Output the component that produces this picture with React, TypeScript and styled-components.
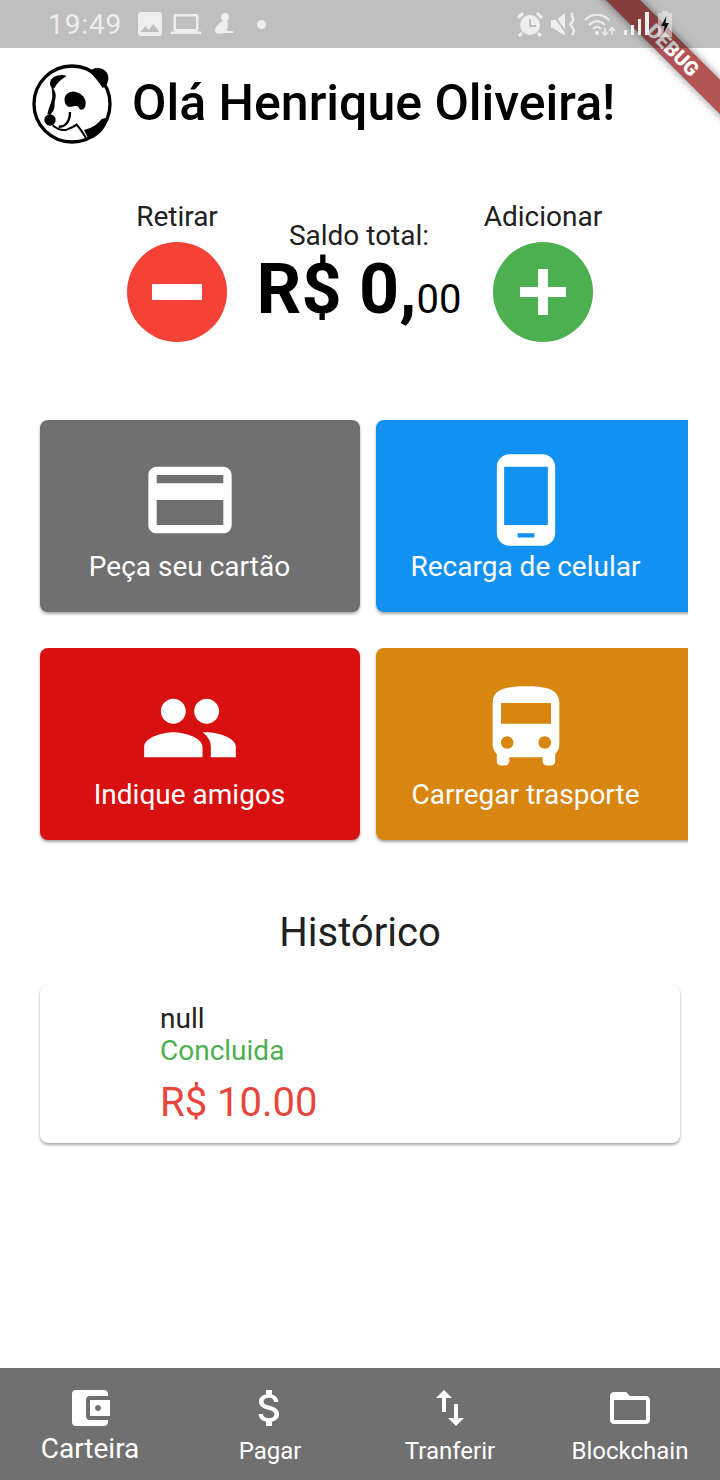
import React from 'react';
import styled, { createGlobalStyle } from 'styled-components';
import {
  MdAccountBalanceWallet,
  MdAttachMoney,
  MdCreditCard,
  MdDirectionsBus,
  MdFolderOpen,
  MdImage,
  MdLaptop,
  MdPeople,
  MdPhoneAndroid,
  MdSwapVert
} from 'react-icons/md';

const GlobalStyle = createGlobalStyle`
  html, body {
    margin: 0;
    padding: 0;
    background: #fff;
    font-family: Roboto, "Liberation Sans", sans-serif;
  }
`;

const Screen = styled.div`
  position: relative;
  width: 720px;
  height: 1480px;
  overflow: hidden;
  display: flex;
  flex-direction: column;
  background: #fff;
`;

const StatusBar = styled.div`
  position: relative;
  z-index: 2;
  height: 48px;
  flex: none;
  background: rgba(0, 0, 0, 0.25);
  color: #eeeeee;
  display: flex;
  align-items: center;
  justify-content: space-between;
  padding: 0 48px;
`;

const StatusGroup = styled.div`
  display: flex;
  align-items: center;
  gap: ${props => props.$gap}px;
`;

const Clock = styled.span`
  font-size: 28px;
  letter-spacing: 0.9px;
  margin-right: 7px;
`;

const Dot = styled.span`
  width: 9px;
  height: 9px;
  border-radius: 50%;
  background: #eeeeee;
  margin-left: 16px;
`;

const SittingSvg = styled.svg`
  margin-left: 6px;
`;

const DebugBanner = styled.div`
  position: absolute;
  z-index: 1;
  left: 573px;
  top: 38px;
  width: 200px;
  height: 24px;
  transform: rotate(45deg);
  background: rgba(150, 15, 15, 0.72);
  box-shadow: 0 0 8px rgba(0, 0, 0, 0.5);
  color: #fff;
  font-size: 20px;
  font-weight: 900;
  line-height: 24px;
  text-align: center;
`;

const Header = styled.header`
  display: flex;
  align-items: center;
  gap: 18px;
  height: 80px;
  margin-top: 16px;
  padding-left: 30px;
`;

const Title = styled.h1`
  margin: 0;
  font-size: 50px;
  font-weight: 500;
  color: #000;
  white-space: nowrap;
  position: relative;
  top: -1px;
`;

const BalanceRow = styled.section`
  display: flex;
  justify-content: center;
  align-items: flex-end;
  margin-top: 56px;
  height: 142px;
`;

const ActionColumn = styled.div`
  display: flex;
  flex-direction: column;
  align-items: center;
  width: 140px;
`;

const ActionLabel = styled.span`
  font-size: 28px;
  line-height: 40px;
  margin-bottom: 5px;
  color: #212121;
  white-space: nowrap;
`;

const RoundButton = styled.div`
  width: 100px;
  height: 100px;
  border-radius: 50%;
  background: ${props => props.$color};
  display: flex;
  align-items: center;
  justify-content: center;
`;

const BalanceColumn = styled.div`
  display: flex;
  flex-direction: column;
  align-items: center;
  width: 226px;
  align-self: flex-end;
  padding: 0 2px 2px 0;
  box-sizing: border-box;
`;

const BalanceLabel = styled.span`
  font-size: 28px;
  line-height: 26px;
  color: #212121;
`;

const Amount = styled.div`
  font-size: 70px;
  line-height: 80px;
  font-weight: 700;
  color: #000;
  white-space: nowrap;
`;

const Cents = styled.span`
  font-size: 40px;
  font-weight: 400;
`;

const CardGrid = styled.section`
  display: grid;
  grid-template-columns: 320px 320px;
  gap: 36px 16px;
  width: 656px;
  box-sizing: border-box;
  margin: 78px 0 0 32px;
  padding: 0 0 8px 8px;
  overflow: hidden;
`;

const ActionCard = styled.div`
  height: 192px;
  border-radius: 8px;
  background: ${props => props.$color};
  box-shadow: 0 2px 3px rgba(0, 0, 0, 0.35);
  color: #fff;
  display: flex;
  flex-direction: column;
  align-items: center;
  padding: 30px 20px 0 0;
  box-sizing: border-box;
`;

const CardLabel = styled.span`
  font-size: 28px;
  line-height: 34px;
  margin-right: 1px;
`;

const SectionTitle = styled.h2`
  margin: 61px 0 0;
  font-size: 40px;
  line-height: 48px;
  font-weight: 400;
  color: #212121;
  text-align: center;
`;

const HistoryCard = styled.article`
  height: 158px;
  margin: 28px 40px 0;
  padding: 18px 0 0 120px;
  box-sizing: border-box;
  border-radius: 8px;
  background: #fff;
  box-shadow: 0 2px 3px rgba(0, 0, 0, 0.35);
  display: flex;
  flex-direction: column;
`;

const HistoryName = styled.span`
  font-size: 28px;
  line-height: 32px;
  color: #212121;
`;

const HistoryStatus = styled.span`
  font-size: 28px;
  line-height: 32px;
  color: #4caf50;
`;

const HistoryValue = styled.span`
  font-size: 40px;
  line-height: 48px;
  margin-top: 12px;
  color: #e8453c;
`;

const BottomNav = styled.nav`
  margin-top: auto;
  height: 112px;
  flex: none;
  background: #707070;
  color: #fff;
  display: grid;
  grid-template-columns: repeat(4, 180px);
`;

const NavItem = styled.div`
  display: flex;
  flex-direction: column;
  align-items: center;
  padding-top: 16px;
`;

const NavLabel = styled.span`
  font-size: ${props => (props.$active ? 28 : 24)}px;
  line-height: 30px;
  margin-top: ${props => (props.$active ? 2 : 4)}px;
`;

// traced by eye from the avatar, coordinates are the 84px crop x3
const PandaLogo = () => (
  <svg width="84" height="84" viewBox="0 0 252 252" aria-hidden="true">
    <circle cx="126" cy="126" r="114" fill="#fff" stroke="#000" strokeWidth="10" />
    <path d="M178 30 C190 12 226 14 234 40 C238 58 230 72 218 78 C206 60 194 44 178 30 Z" fill="#000" />
    <path d="M60 62 C62 44 90 34 110 42 C92 52 80 64 72 80 C64 76 58 70 60 62 Z" fill="#000" />
    <path d="M64 72 C74 84 80 96 76 110 C72 124 76 134 70 146 L60 160 L52 156 C56 138 62 128 66 112 C68 98 66 86 64 72 Z" fill="#000" />
    <circle cx="60" cy="174" r="17" fill="#000" />
    <path d="M68 190 C82 202 96 207 110 203 C122 199 132 194 140 188 L154 206 L168 228" fill="none" stroke="#000" strokeWidth="6" />
    <path d="M86 194 C106 196 120 178 120 150" fill="none" stroke="#000" strokeWidth="7" />
    <path
      d="M104 116 C102 98 118 87 134 89 C156 92 172 112 166 132 C162 146 148 146 146 136 C142 130 132 132 124 134 C112 136 105 128 104 116 Z"
      fill="#000"
    />
    <path d="M214 172 C200 190 182 200 162 204 L176 232 C205 225 228 200 236 165 Z" fill="#000" />
  </svg>
);

const SittingIcon = () => (
  <SittingSvg width="24" height="24" viewBox="0 0 24 24" fill="#eeeeee" aria-hidden="true">
    <circle cx="13" cy="5" r="4" />
    <path d="M10 9c-2 3-7 5-7 9 0 4 5 4 9 3h9c1 0 0-2-1-2-2 0-5 0-6-1 2-2 3-6 1-9z" />
  </SittingSvg>
);

const AlarmIcon = () => (
  <svg width="26" height="26" viewBox="0 0 26 26" aria-hidden="true">
    <circle cx="13" cy="14" r="10" fill="#eeeeee" />
    <path d="M13 8v7h6" fill="none" stroke="#bfbfbf" strokeWidth="2" />
    <path d="M1 7l5-5M25 7l-5-5M5 22l-3 3M21 22l3 3" fill="none" stroke="#eeeeee" strokeWidth="3" />
  </svg>
);

const VibrateIcon = () => (
  <svg width="27" height="26" viewBox="0 0 27 26" aria-hidden="true">
    <path d="M1 9h5l9-7v22l-3-1L3 17H1z" fill="#eeeeee" />
    <path d="M3 3l14 20" stroke="#bfbfbf" strokeWidth="2" />
    <path d="M23 2c-4 4 2 5 0 8s-4 3-1 6 2 5 0 8" fill="none" stroke="#eeeeee" strokeWidth="2.4" />
  </svg>
);

const WifiIcon = () => (
  <svg width="32" height="26" viewBox="0 0 32 26" aria-hidden="true">
    <g fill="none" stroke="#eeeeee" strokeWidth="2">
      <path d="M1 9c7-7 17-7 24 0" />
      <path d="M5 14c5-5 11-5 16 0" />
      <path d="M9 18c3-3 5-3 8 0" />
    </g>
    <circle cx="13" cy="22" r="2" fill="#eeeeee" />
    <path d="M21 17v6M18 21l3 3 3-3M28 24v-6M25 20l3-3 3 3" fill="none" stroke="#eeeeee" strokeWidth="1.6" />
  </svg>
);

const SignalIcon = () => (
  <svg width="28" height="26" viewBox="0 0 28 26" fill="#eeeeee" aria-hidden="true">
    <rect x="1" y="19" width="3" height="5" />
    <rect x="8" y="14" width="3" height="10" />
    <rect x="15" y="8" width="3" height="16" />
    <rect x="22" y="1" width="4" height="23" />
  </svg>
);

const BatteryIcon = () => (
  <svg width="14" height="26" viewBox="0 0 14 26" aria-hidden="true">
    <path d="M4 0h6v2h4v24H0V2h4z" fill="#eeeeee" fillOpacity="0.55" />
    <path d="M8.5 5L3 15h3.5l-1 7L11 12H7.5z" fill="#111" />
  </svg>
);

const cards = [
  { label: 'Peça seu cartão', color: '#707070', Icon: MdCreditCard },
  { label: 'Recarga de celular', color: '#1191f2', Icon: MdPhoneAndroid },
  { label: 'Indique amigos', color: '#d81010', Icon: MdPeople },
  { label: 'Carregar trasporte', color: '#d8860f', Icon: MdDirectionsBus }
];

const navItems = [
  { label: 'Carteira', Icon: MdAccountBalanceWallet, active: true },
  { label: 'Pagar', Icon: MdAttachMoney },
  { label: 'Tranferir', Icon: MdSwapVert },
  { label: 'Blockchain', Icon: MdFolderOpen }
];

export default function App() {
  return (
    <Screen>
      <GlobalStyle />
      <StatusBar>
        <StatusGroup $gap={5}>
          <Clock>19:49</Clock>
          <MdImage size={32} />
          <MdLaptop size={30} />
          <SittingIcon />
          <Dot />
        </StatusGroup>
        <StatusGroup $gap={7}>
          <AlarmIcon />
          <VibrateIcon />
          <WifiIcon />
          <SignalIcon />
          <BatteryIcon />
        </StatusGroup>
      </StatusBar>
      <DebugBanner>DEBUG</DebugBanner>

      <Header>
        <PandaLogo />
        <Title>Olá Henrique Oliveira!</Title>
      </Header>

      <BalanceRow>
        <ActionColumn>
          <ActionLabel>Retirar</ActionLabel>
          <RoundButton $color="#f44336">
            <svg width="50" height="16" viewBox="0 0 50 16" aria-hidden="true">
              <rect width="50" height="16" fill="#fff" />
            </svg>
          </RoundButton>
        </ActionColumn>
        <BalanceColumn>
          <BalanceLabel>Saldo total:</BalanceLabel>
          <Amount>
            R$ 0,<Cents>00</Cents>
          </Amount>
        </BalanceColumn>
        <ActionColumn>
          <ActionLabel>Adicionar</ActionLabel>
          <RoundButton $color="#4caf50">
            <svg width="46" height="46" viewBox="0 0 46 46" aria-hidden="true">
              <path d="M18 0h10v18h18v10H28v18H18V28H0V18h18z" fill="#fff" />
            </svg>
          </RoundButton>
        </ActionColumn>
      </BalanceRow>

      <CardGrid>
        {cards.map(({ label, color, Icon }) => (
          <ActionCard key={label} $color={color}>
            <Icon size={100} />
            <CardLabel>{label}</CardLabel>
          </ActionCard>
        ))}
      </CardGrid>

      <SectionTitle>Histórico</SectionTitle>
      <HistoryCard>
        <HistoryName>null</HistoryName>
        <HistoryStatus>Concluida</HistoryStatus>
        <HistoryValue>R$ 10.00</HistoryValue>
      </HistoryCard>

      <BottomNav>
        {navItems.map(({ label, Icon, active }) => (
          <NavItem key={label}>
            <Icon size={48} />
            <NavLabel $active={active}>{label}</NavLabel>
          </NavItem>
        ))}
      </BottomNav>
    </Screen>
  );
}
